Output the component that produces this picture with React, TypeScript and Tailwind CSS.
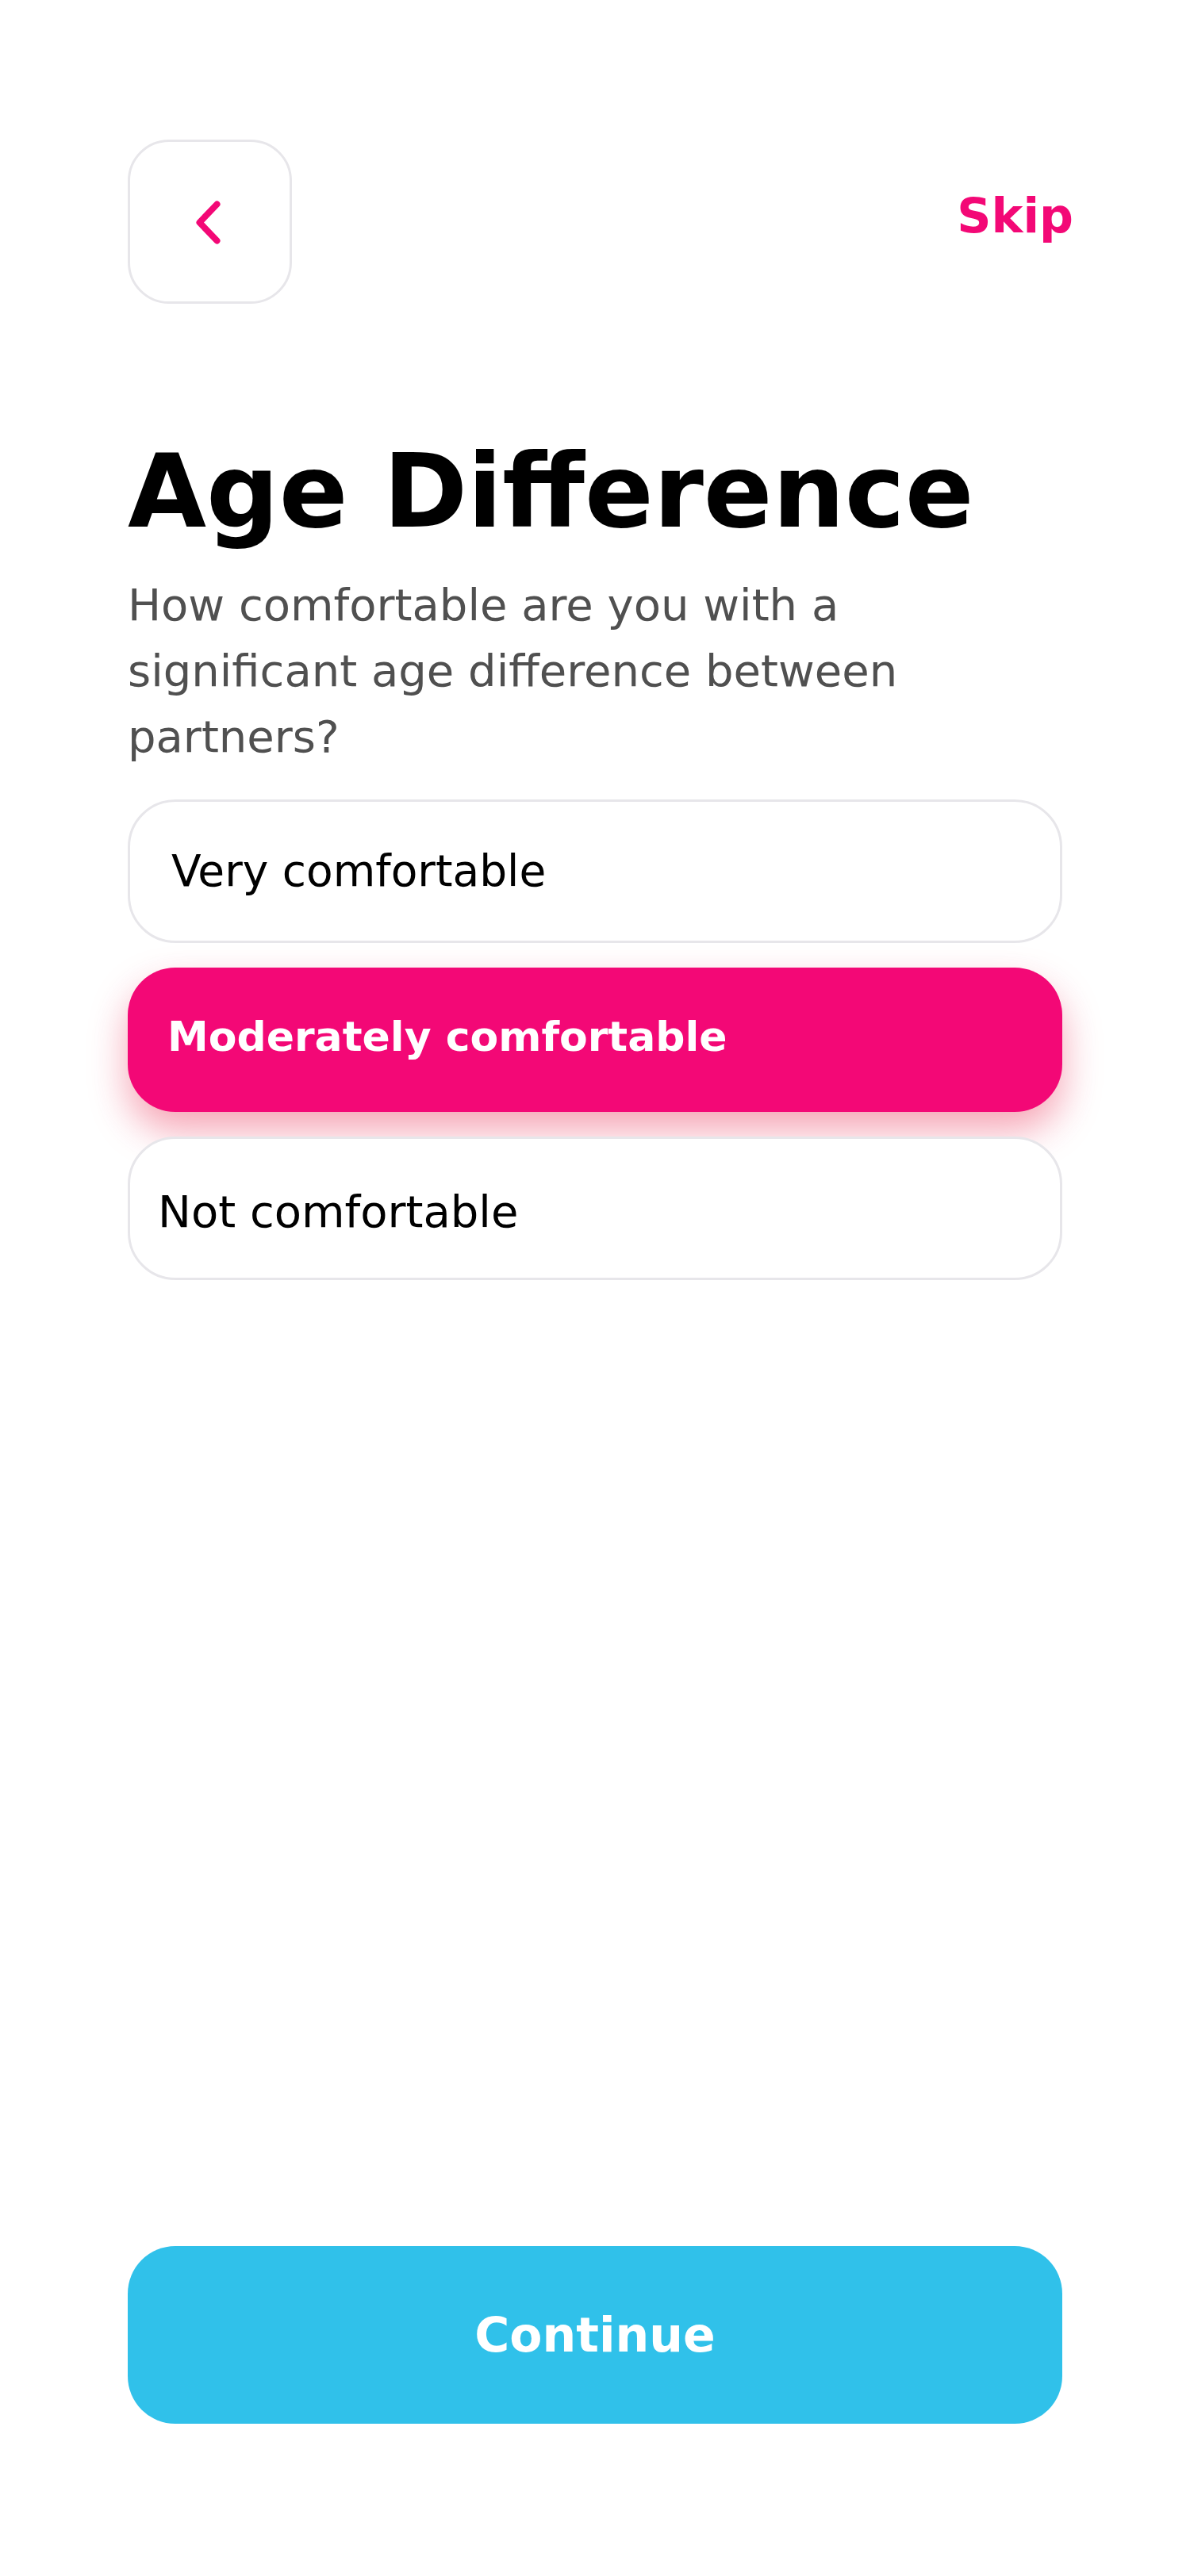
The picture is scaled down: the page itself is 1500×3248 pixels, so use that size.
import { useState } from 'react'

const options = [
  { label: 'Very comfortable', box: 'pl-[52px] text-[55px]' },
  { label: 'Moderately comfortable', box: 'pl-[50px] pb-[8px] text-[52px]' },
  { label: 'Not comfortable', box: 'pl-[35px] pt-[8px] text-[56px]' },
]

export default function App() {
  const [selected, setSelected] = useState(1)

  return (
    <div className="min-h-screen bg-white flex flex-col px-[161px] pt-[176px] pb-[192px] font-['DejaVu_Sans',sans-serif]">
      <div className="flex justify-between items-start">
        <button className="w-[207px] h-[207px] rounded-[52px] border-[3px] border-[#e7e6ea] flex items-center justify-center">
          <svg width="40" height="60" viewBox="0 0 40 60" fill="none">
            <path
              d="M28.5 7.5 L6.5 30.5 L28.5 53.5"
              stroke="#f30876"
              strokeWidth="8"
              strokeLinecap="round"
              strokeLinejoin="round"
            />
          </svg>
        </button>
        <span className="mt-[66px] -mr-[14px] text-[60px] leading-none font-bold text-[#f30876]">
          Skip
        </span>
      </div>

      <h1 className="mt-[173px] text-[128px] leading-none font-bold text-black">Age Difference</h1>
      <p className="mt-[37px] max-w-[1030px] text-[56px] leading-[83px] text-[#505050]">
        How comfortable are you with a significant age difference between partners?
      </p>

      <div className="mt-[38px] flex flex-col gap-[31px]">
        {options.map((opt, i) =>
          i === selected ? (
            <button
              key={opt.label}
              onClick={() => setSelected(i)}
              className={`h-[182px] w-full rounded-[60px] bg-[#f30876] flex items-center ${opt.box} leading-none font-bold text-white shadow-[0_24px_48px_rgba(232,32,72,0.4)]`}
            >
              {opt.label}
            </button>
          ) : (
            <button
              key={opt.label}
              onClick={() => setSelected(i)}
              className={`h-[181px] w-full rounded-[60px] bg-white border-[3px] border-[#e7e6ea] flex items-center ${opt.box} leading-none text-black`}
            >
              {opt.label}
            </button>
          )
        )}
      </div>

      <button className="mt-auto h-[224px] w-full rounded-[60px] bg-[#30c1ea] text-white text-[60px] leading-none font-bold">
        Continue
      </button>
    </div>
  )
}
